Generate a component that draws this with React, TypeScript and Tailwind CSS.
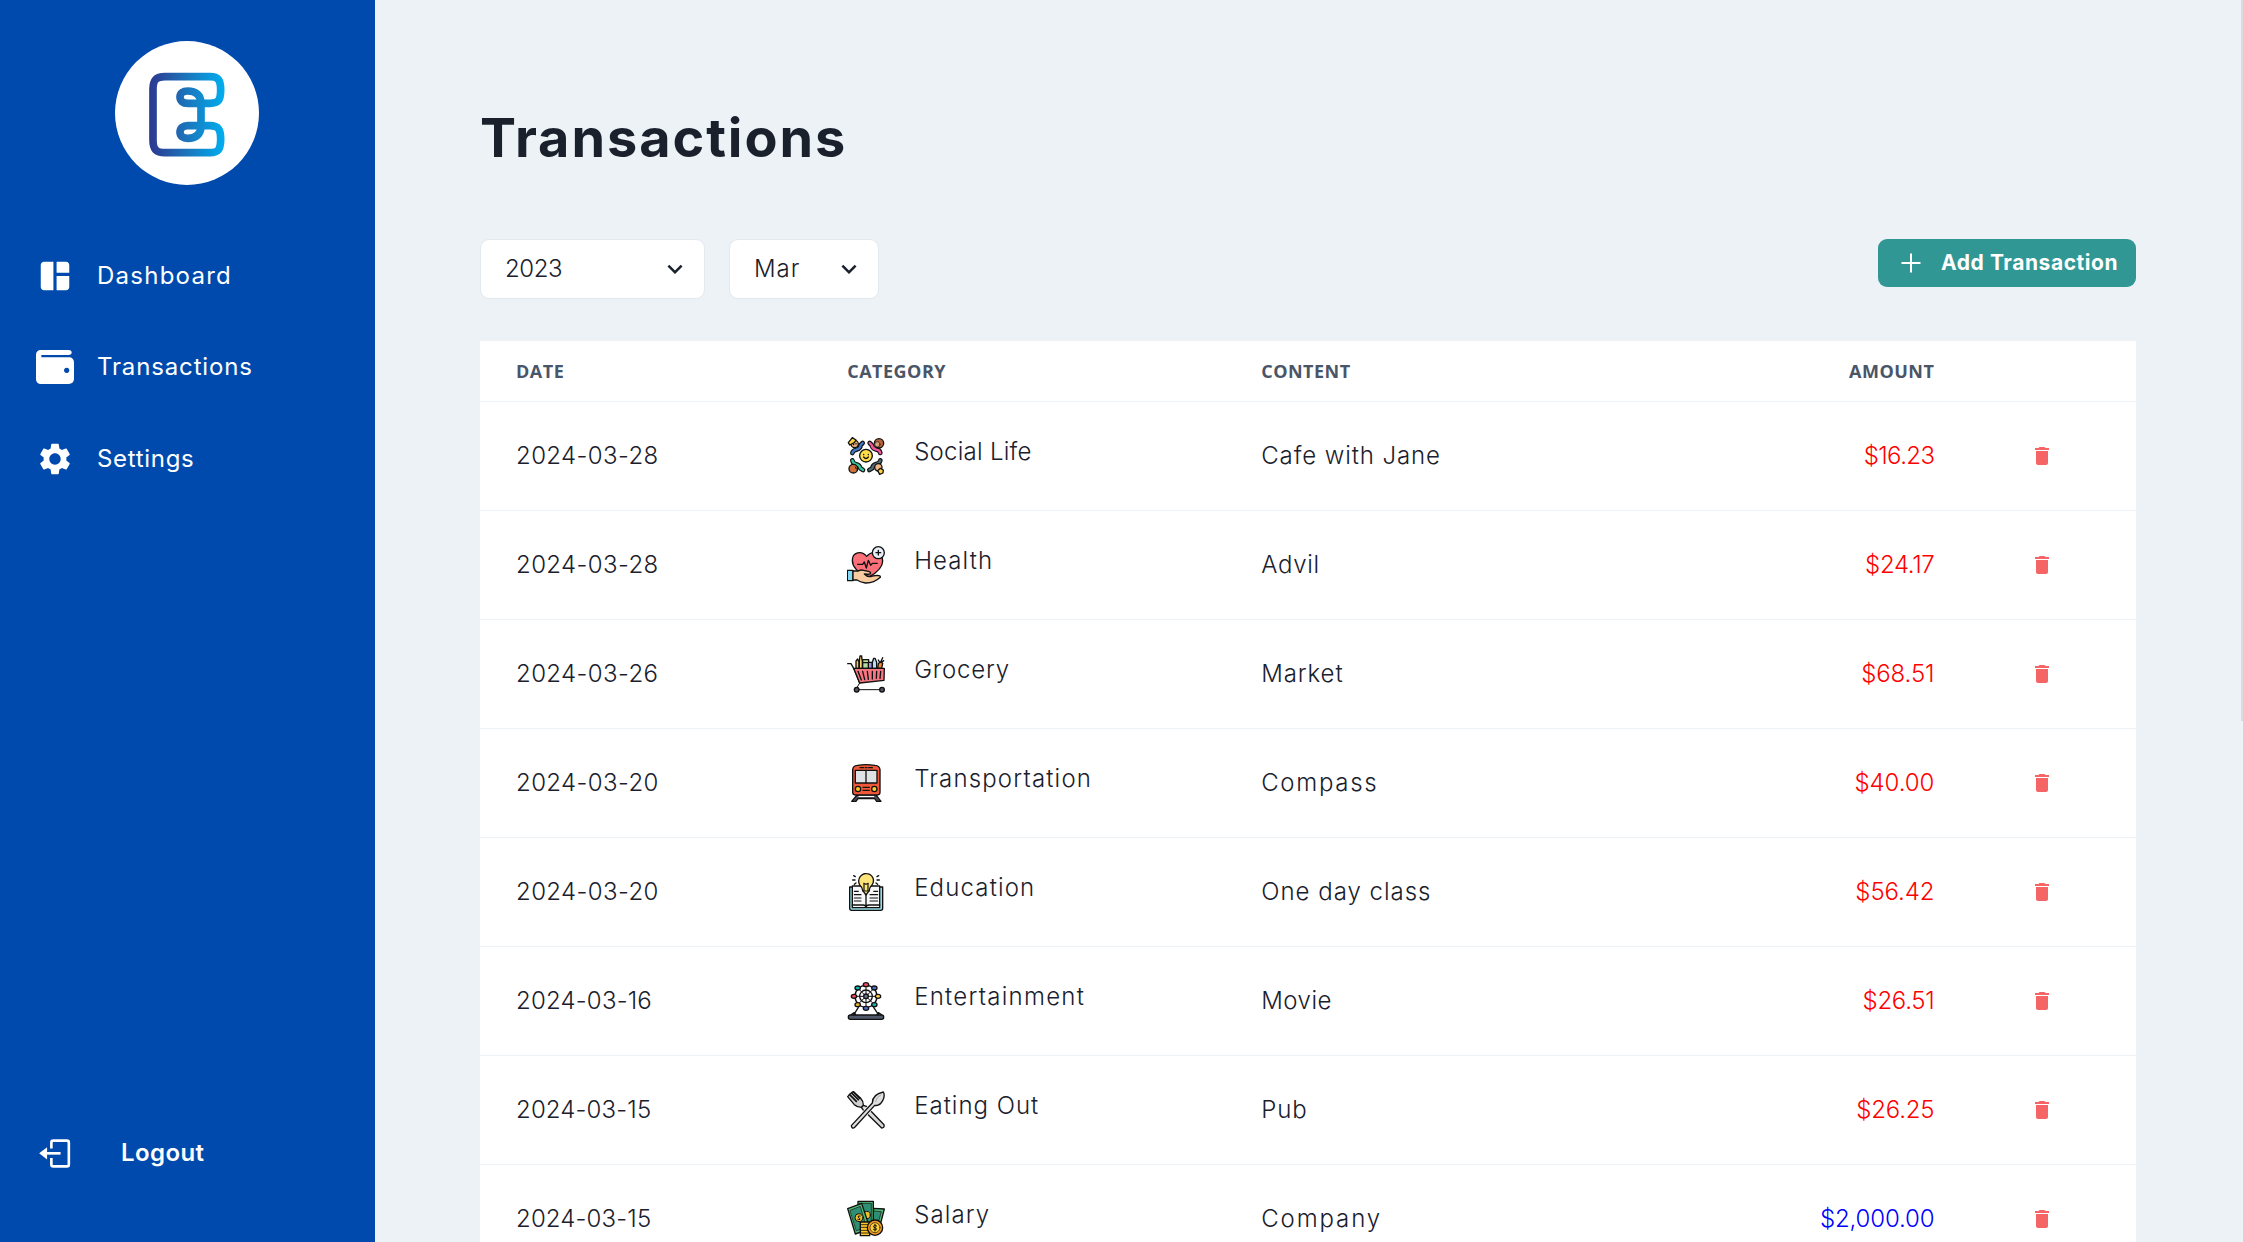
import type { ReactNode } from 'react';
import { MdDelete, MdSettings, MdSpaceDashboard } from 'react-icons/md';

function Logo() {
  return (
    <div className="size-36 rounded-full bg-white">
      <svg viewBox="345 123 432 432" className="size-full">
        <defs>
          <linearGradient id="logo" gradientUnits="userSpaceOnUse" x1="447" y1="0" x2="673" y2="0">
            <stop offset="0" stopColor="#2b3990" />
            <stop offset="0.1" stopColor="#2a4297" />
            <stop offset="0.5" stopColor="#1b75bc" />
            <stop offset="1" stopColor="#00aeef" />
          </linearGradient>
        </defs>
        <path
          d="M603 344V310C603 285 588 273 563 273C549 273 540 280 540 291C540 303 549 310 563 310H630C655 310 662 300 662 270C662 240 655 230 630 230H495C468 230 459 240 459 268V420C459 448 468 458 495 458H630C655 458 662 448 662 417C662 388 655 377 630 377H563C549 377 540 385 540 397C540 408 549 415 563 415C588 415 603 403 603 378Z"
          fill="none"
          stroke="url(#logo)"
          strokeWidth="23"
        />
      </svg>
    </div>
  );
}

function WalletIcon() {
  return (
    <svg viewBox="0 0 114 102" className="h-[34px] w-[38px] fill-current">
      <path
        fillRule="evenodd"
        d="M14 0H98C104 0 107 3 107 7.500C107 12 104 15 98 15H16V22H98C108 22 114 28 114 38V85C114 96 108 102 98 102H16C6 102 0 96 0 86V14C0 5 6 0 14 0ZM92 53a8 8 0 1 0 .1 0Z"
      />
    </svg>
  );
}

function LogoutIcon() {
  return (
    <svg viewBox="0 0 96 88" className="h-[29px] w-8">
      <path d="M37 29V11Q37 5 43 5H84Q90 5 90 11V77Q90 83 84 83H43Q37 83 37 77V58" fill="none" stroke="currentColor" strokeWidth="8" />
      <path d="M22 43.500H65" stroke="currentColor" strokeWidth="8" />
      <path d="M0 43.500L24 25V62Z" fill="currentColor" />
    </svg>
  );
}

function Art({ children }: { children: ReactNode }) {
  return (
    <svg viewBox="0 0 114 114" className="size-[38px] shrink-0" fill="none" stroke="#111" strokeWidth="4" strokeLinejoin="round" strokeLinecap="round">
      {children}
    </svg>
  );
}

function Limb({ d, color }: { d: string; color: string }) {
  return (
    <>
      <path d={d} strokeWidth="14" />
      <path d={d} stroke={color} strokeWidth="7" />
    </>
  );
}

function SocialArt() {
  return (
    <Art>
      <Limb d="M16 48Q18 40 28 38Q40 35 41 24L47 18" color="#3f78c4" />
      <Limb d="M68 18L74 24Q75 33 86 37Q98 38 100 48" color="#f0569a" />
      <Limb d="M16 70Q18 80 28 82Q38 84 40 94L48 99" color="#35c79d" />
      <Limb d="M67 99L76 94Q77 84 87 81Q98 80 100 70" color="#4d6b75" />
      <circle cx="23" cy="21" r="11" fill="#efb586" />
      <path d="M4 17L16 2L27 9L22 17L8 24Z" fill="#ffd43b" />
      <path d="M20 22v1M27 20v1" />
      <circle cx="96" cy="19" r="14" fill="#b9623b" />
      <circle cx="91" cy="22" r="8" fill="#d9a078" strokeWidth="2" />
      <circle cx="19" cy="95" r="13" fill="#cf7138" />
      <path d="M25 90l3 6" strokeWidth="3" />
      <circle cx="94" cy="91" r="11" fill="#efb586" />
      <path d="M92 101L100 94L109 99L108 108L98 112Z" fill="#ffd43b" />
      <circle cx="57" cy="56" r="19" fill="#ffdc4a" />
      <path d="M50 52v1M64 52v1M50 60Q57 69 64 60" />
    </Art>
  );
}

function HealthArt() {
  return (
    <Art>
      <path d="M59 92C38 82 16 66 16 43C16 18 44 12 59 31C76 12 107 19 107 45C107 66 82 84 66 93Z" fill="#fb7079" />
      <path d="M32 55H47L52 48L58 66L64 43L71 58L76 52H91" />
      <circle cx="94" cy="20" r="18" fill="#e9eef7" />
      <path d="M94 13V27M87 20H101" />
      <rect x="1" y="73" width="17" height="31" fill="#86d9f5" />
      <path d="M18 75H34Q42 70 50 73L64 76Q72 78 70 83Q67 86 52 84Q62 95 76 90L91 88Q101 88 100 94Q80 112 55 111Q38 108 30 102H18Z" fill="#f8cba0" />
    </Art>
  );
}

function GroceryArt() {
  return (
    <Art>
      <path d="M27 40V18L32 12L36 21V40Z" fill="#f5c75c" />
      <path d="M37 40V17Q38 11 39 3H44Q44 11 46 18V40Z" fill="#f8d978" />
      <path d="M47 14H65V40H47Z" fill="#b5dc9c" />
      <path d="M47 23H65" />
      <path d="M64 22H76V40H64Z" fill="#a597e8" />
      <path d="M76 40V22L80 10H84L89 22V40Z" fill="#b9dcf5" />
      <path d="M92 39L94 26Q101 18 107 25L104 40Z" fill="#f08a36" />
      <path d="M98 22L94 15M101 21L107 8M103 22L110 17" />
      <path d="M2 26H12L20 40L38 84" />
      <path d="M20 40H112L111 76L38 84Z" fill="#f77681" />
      <path d="M33 49L43 75M47 49L53 74M61 49L64 73M76 49V72M89 49L88 70M101 49L99 70" />
      <path d="M38 84L31 96M32 104H101" strokeWidth="3" />
      <circle cx="29" cy="104" r="7" fill="#535362" />
      <circle cx="105" cy="104" r="7" fill="#535362" />
    </Art>
  );
}

function TrainArt() {
  return (
    <Art>
      <path d="M31 92L14 112H27L33 104H83L89 112H102L86 92Z" fill="#4a4a55" />
      <path d="M36 97H80" stroke="#fff" />
      <path d="M17 17Q18 5 31 4Q57 0 84 4Q98 5 99 17V85Q99 93 91 93H25Q17 93 17 85Z" fill="#f1583a" />
      <path d="M39 11H50M55 11H60M65 11H76" />
      <path d="M25 19H90V57H25Z" fill="#dfe1e5" />
      <path d="M57 19V57" />
      <circle cx="33" cy="75" r="8" fill="#ffc928" />
      <circle cx="82" cy="75" r="8" fill="#ffc928" />
      <path d="M48 70H67M48 79H67" />
    </Art>
  );
}

function EducationArt() {
  return (
    <Art>
      <path d="M8 42H107V106Q107 112 101 112H14Q8 112 8 106Z" fill="#99dce8" />
      <path d="M16 39H41Q57 40 57 48Q57 40 73 39H98V104H16Z" fill="#f8f8fa" />
      <path d="M16 96H48Q57 96 57 103Q57 96 66 96H98M57 66V103" />
      <path d="M22 55H34M22 65H42M22 75H42M22 84H42M80 55H92M69 65H92M69 75H92M69 84H92" strokeWidth="3.500" />
      <path d="M47 52Q46 43 38 36Q31 22 40 10Q49 0 58 2Q72 2 78 15Q82 27 75 36Q67 43 67 52L57 66Z" fill="#ffe47a" />
      <path d="M51 52V33M63 52V33M50 31L57 34L64 31M47 54H67" strokeWidth="3.500" />
      <path d="M20 8L25 11M17 21H24M22 34L27 30M90 11L95 8M90 21H97M87 30L92 34" />
    </Art>
  );
}

const cabins: [number, number, string][] = [
  [57, 8, '#f4495f'],
  [82, 18, '#526bd0'],
  [93, 43, '#ffd14a'],
  [82, 68, '#12b5ae'],
  [57, 79, '#526bd0'],
  [32, 68, '#e9b52d'],
  [21, 43, '#f4495f'],
  [32, 18, '#12b5ae'],
];

function EntertainmentArt() {
  return (
    <Art>
      <circle cx="57" cy="43" r="33" />
      <circle cx="57" cy="43" r="19" />
      <path d="M57 12V75M25 43H89M34 20L80 66M80 20L34 66" strokeWidth="3" />
      <circle cx="57" cy="43" r="7" fill="#69758a" />
      {cabins.map(([x, y, color], i) => (
        <ellipse key={i} cx={x} cy={y} rx="8" ry="6" fill={color} />
      ))}
      <path d="M34 76L20 99M80 76L95 99M13 98L22 92L26 98M90 98L94 92L103 98" />
      <rect x="4" y="99" width="106" height="13" rx="6" fill="#4f596a" />
    </Art>
  );
}

function EatingArt() {
  return (
    <Art>
      <path d="M49 43L58 46L111 101Q113 111 104 111L48 56L43 49Z" fill="#d9d9d9" />
      <path d="M2 17L22 41Q31 49 43 49L49 43Q49 30 41 22L19 2L14 5L8 10Z" fill="#d0d0d0" />
      <path d="M8 11L28 31M14 6L34 26M20 3L39 22" strokeWidth="5" />
      <path d="M76 36Q76 10 109 3Q115 14 107 29Q98 46 83 43L24 108Q15 116 13 104Z" fill="#dedede" stroke="#fff" strokeWidth="8" />
      <path d="M76 36Q76 10 109 3Q115 14 107 29Q98 46 83 43L24 108Q15 116 13 104Z" fill="#dedede" />
      <path d="M86 32Q88 17 101 12" stroke="#aaa" strokeWidth="3" />
    </Art>
  );
}

function SalaryArt() {
  return (
    <Art>
      <path d="M80 25L112 27L94 96L66 82Z" fill="#52bd76" />
      <path d="M82 33L103 35L90 82L70 78Z" fill="#2f8f75" strokeWidth="2" />
      <path d="M33 4H79V82H33Z" fill="#52bd76" />
      <path d="M39 10H73V76H39Z" fill="#2f8f75" strokeWidth="2" />
      <circle cx="59" cy="45" r="11" fill="#f2c230" strokeWidth="3" />
      <path d="M2 26L44 10L69 86L25 102Z" fill="#52bd76" />
      <path d="M10 31L40 19L58 82L29 92Z" fill="#2f8f75" strokeWidth="2" />
      <circle cx="36" cy="53" r="12" fill="#f2c230" strokeWidth="3" />
      <path d="M40 48Q33 46 33 51Q39 54 39 58Q36 61 32 58" strokeWidth="3" />
      <path d="M40 66H68V107H40Z" fill="#ffc928" />
      <path d="M40 74H66M40 82H66M40 91H66M40 99H66" strokeWidth="2.500" />
      <circle cx="84" cy="83" r="23" fill="#f39b24" />
      <circle cx="84" cy="83" r="15" fill="#ffce35" strokeWidth="2" />
      <path d="M89 78Q80 73 79 79Q80 83 84 83Q90 85 88 89Q83 92 79 88M84 73V93" strokeWidth="3" />
    </Art>
  );
}

type Row = {
  date: ReactNode;
  art: ReactNode;
  category: ReactNode;
  content: ReactNode;
  amount: ReactNode;
  income?: boolean;
};

const rows: Row[] = [
  {
    date: '2024-03-28',
    art: <SocialArt />,
    category: <span className="tracking-[0.25px]">Social Life</span>,
    content: <span className="tracking-[0.9px]">Cafe with Jane</span>,
    amount: <span className="tracking-[-0.6px]">$16.23</span>,
  },
  {
    date: '2024-03-28',
    art: <HealthArt />,
    category: <span className="tracking-[1.1px]">Health</span>,
    content: <span className="tracking-[0.7px]">Advil</span>,
    amount: <span className="tracking-[-0.35px]">$24.17</span>,
  },
  {
    date: '2024-03-26',
    art: <GroceryArt />,
    category: <span className="tracking-[0.83px]">Grocery</span>,
    content: <span className="tracking-[0.9px]">Market</span>,
    amount: <span className="tracking-[-0.1px]">$68.51</span>,
  },
  {
    date: '2024-03-20',
    art: <TrainArt />,
    category: <span className="tracking-[1.17px]">Transportation</span>,
    content: <span className="tracking-[1.7px]">Compass</span>,
    amount: <span className="tracking-[-0.05px]">$40.00</span>,
  },
  {
    date: '2024-03-20',
    art: <EducationArt />,
    category: <span className="tracking-[1.15px]">Education</span>,
    content: <span className="tracking-[1px]">One day class</span>,
    amount: <span className="tracking-[-0.1px]">$56.42</span>,
  },
  {
    date: <span className="tracking-[0.2px]">2024-03-16</span>,
    art: <EntertainmentArt />,
    category: <span className="tracking-[1.25px]">Entertainment</span>,
    content: <span className="tracking-[0.5px]">Movie</span>,
    amount: <span className="tracking-[-0.3px]">$26.51</span>,
  },
  {
    date: <span className="tracking-[0.15px]">2024-03-15</span>,
    art: <EatingArt />,
    category: <span className="tracking-[1px]">Eating Out</span>,
    content: <span className="tracking-[0.9px]">Pub</span>,
    amount: <span className="tracking-[-0.2px]">$26.25</span>,
  },
  {
    date: <span className="tracking-[0.15px]">2024-03-15</span>,
    art: <SalaryArt />,
    category: <span className="tracking-[1.08px]">Salary</span>,
    content: <span className="tracking-[1.9px]">Company</span>,
    amount: <span className="tracking-[-0.15px]">$2,000.00</span>,
    income: true,
  },
];

function Select({ children, width }: { children: ReactNode; width: string }) {
  return (
    <button className={`flex h-[60px] items-center justify-between rounded-[9px] border border-[#e2e8f0] bg-white pr-3.5 pl-6 text-2xl font-light ${width}`}>
      {children}
      <svg viewBox="0 0 24 24" className="size-[30px] fill-current">
        <path d="M16.590 8.590L12 13.170 7.410 8.590 6 10l6 6 6-6z" />
      </svg>
    </button>
  );
}

function NavItem({ icon, children }: { icon: ReactNode; children: ReactNode }) {
  return (
    <a className="flex h-[91.6px] items-center gap-[23px]">
      <span className="flex w-[38px] justify-center">{icon}</span>
      {children}
    </a>
  );
}

const columns = 'grid grid-cols-[20fr_25fr_25fr_20fr_10fr] items-center border-b border-[#edf2f7]';

export default function App() {
  return (
    <div className="flex h-screen overflow-hidden bg-[#edf2f7] font-['Inter',sans-serif] text-[#1a202c]">
      <aside className="flex w-[375px] shrink-0 flex-col bg-[#004aad] pt-[41px] pb-[69px] text-2xl text-white">
        <div className="pl-[115px]">
          <Logo />
        </div>
        <nav className="mt-[45px] pl-9">
          <NavItem icon={<MdSpaceDashboard className="size-[38px] shrink-0" />}>
            <span className="tracking-[1.25px]">Dashboard</span>
          </NavItem>
          <NavItem icon={<WalletIcon />}>
            <span className="tracking-[0.85px]">Transactions</span>
          </NavItem>
          <NavItem icon={<MdSettings className="size-[38px] shrink-0" />}>
            <span className="tracking-[0.7px]">Settings</span>
          </NavItem>
        </nav>
        <a className="mt-auto flex h-10 items-center gap-[50px] pl-[39px] font-semibold tracking-[0.4px]">
          <LogoutIcon />
          Logout
        </a>
      </aside>

      <main className="ml-[105px] flex w-[1656px] flex-col">
        <h1 className="mt-[106px] h-16 text-[54px] leading-[64px] font-bold tracking-[1.94px]">Transactions</h1>
        <div className="mt-[69px] flex items-start">
          <div className="flex gap-6">
            <Select width="w-[225px]">
              <span className="tracking-[-0.4px]">2023</span>
            </Select>
            <Select width="w-[150px]">
              <span className="tracking-[1px]">Mar</span>
            </Select>
          </div>
          <button className="ml-auto flex h-12 w-[258px] items-center gap-5 rounded-[9px] bg-[#319795] pl-[23px] text-[21px] font-bold tracking-[0.57px] whitespace-nowrap text-white">
            <svg viewBox="0 0 20 20" className="size-5 shrink-0" stroke="currentColor" strokeWidth="2">
              <path d="M10 .5V19.500M.5 10H19.500" />
            </svg>
            Add Transaction
          </button>
        </div>

        <section className="mt-[42px] bg-white">
          <div className={`${columns} h-[61px] font-['Open_Sans',sans-serif] text-[18px] font-bold tracking-[0.5px] text-[#4a5568]`}>
            <span className="px-9">DATE</span>
            <span className="px-9">CATEGORY</span>
            <span className="px-9">CONTENT</span>
            <span className="px-9 text-right">AMOUNT</span>
          </div>
          {rows.map((row, i) => (
            <div key={i} className={`${columns} h-[109px] text-2xl font-light`}>
              <span className="px-9 tracking-[0.4px]">{row.date}</span>
              <div className="flex items-center gap-[29px] px-9">
                {row.art}
                <span className="-mt-2">{row.category}</span>
              </div>
              <span className="px-9">{row.content}</span>
              <span className={`px-9 text-right ${row.income ? 'text-[#0000ff]' : 'text-[#ff0000]'}`}>{row.amount}</span>
              <button className="pl-[60px] text-[#f56565]">
                <MdDelete className="size-6" />
              </button>
            </div>
          ))}
        </section>
      </main>
      <div className="ml-auto h-[721px] w-0.5 bg-[#dcdcdd]" />
    </div>
  );
}
